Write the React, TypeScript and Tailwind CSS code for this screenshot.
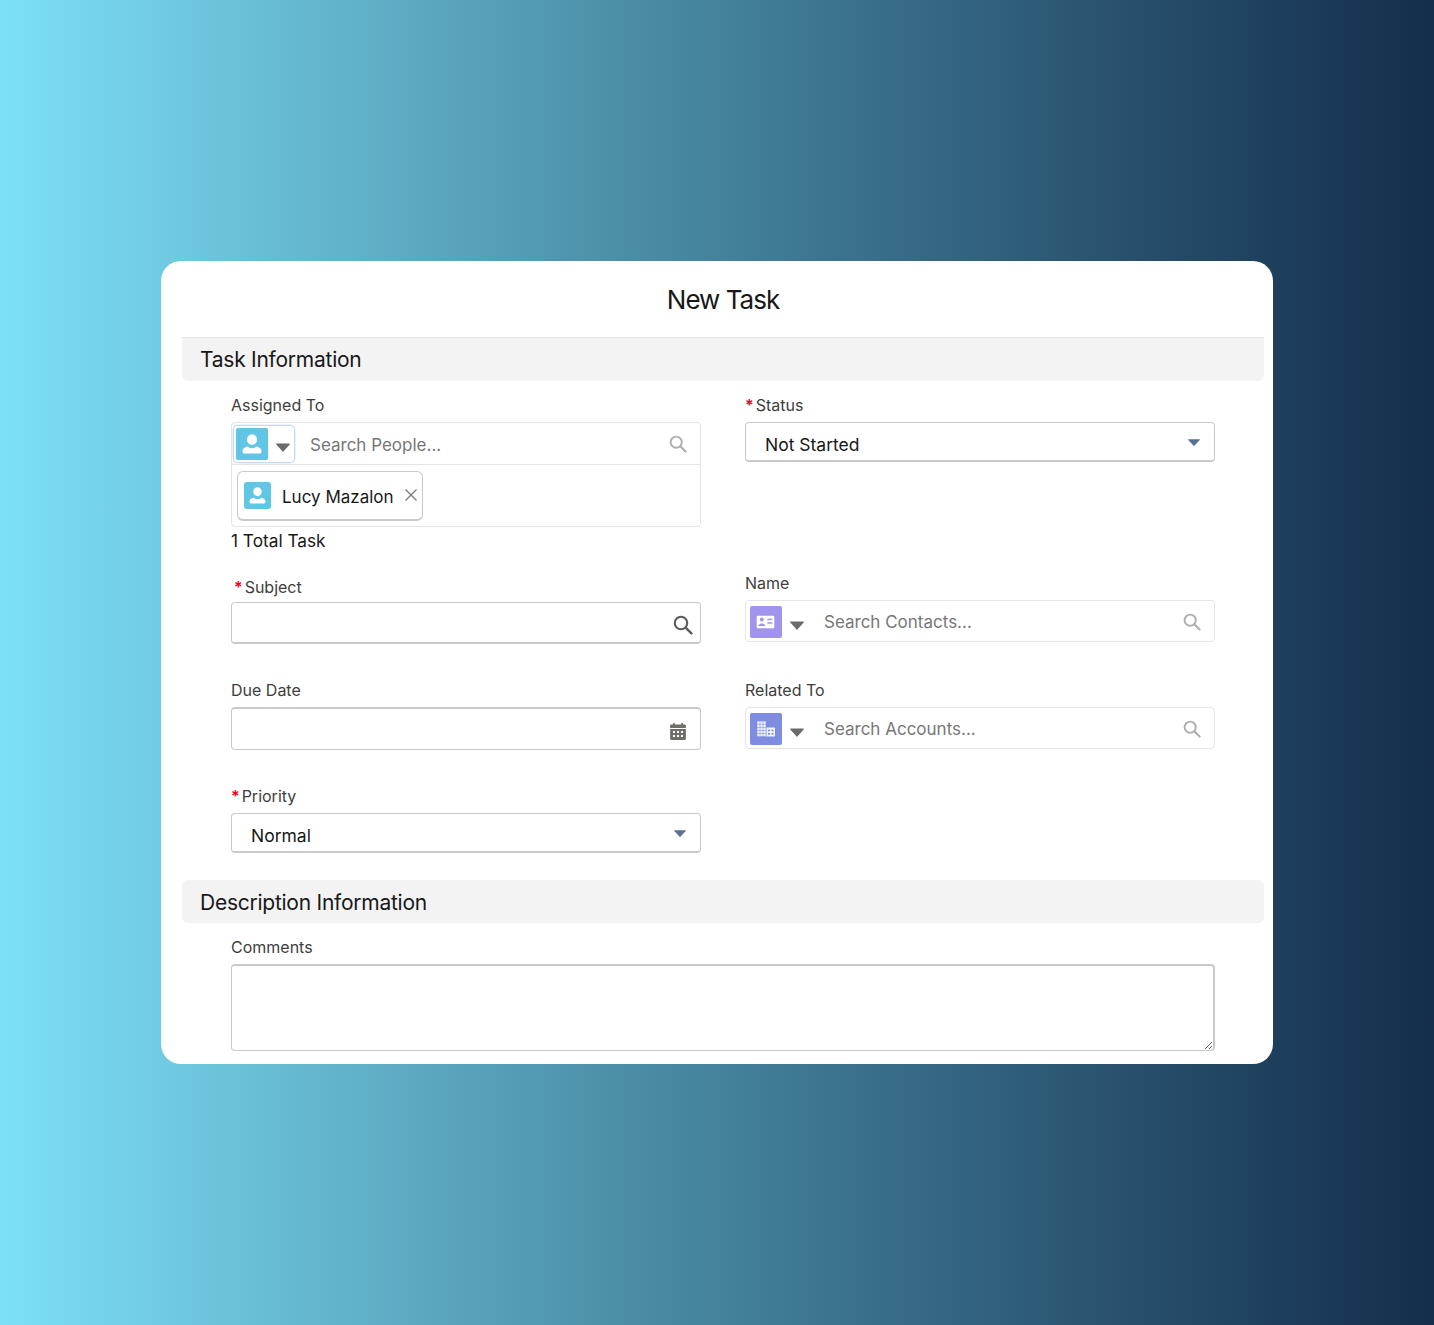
import type { ReactNode } from "react";

function Caret({ className }: { className: string }) {
  return (
    <svg viewBox="0 0 14 9" className={className}>
      <path d="M.8.6h12.4c.5 0 .8.5.5.9L7.4 8.4c-.2.3-.6.3-.8 0L.3 1.5C0 1.1.3.6.8.6z" fill="currentColor" />
    </svg>
  );
}

function SearchIcon({ className }: { className: string }) {
  return (
    <svg viewBox="0 0 20 20" fill="none" stroke="currentColor" className={className}>
      <circle cx="8" cy="8" r="6.2" strokeWidth="2.1" />
      <path d="M12.6 12.6l5.8 5.8" strokeWidth="2.400" strokeLinecap="round" />
    </svg>
  );
}

function PersonIcon({ className }: { className: string }) {
  return (
    <svg viewBox="0 0 32 32" fill="#fff" className={className}>
      <ellipse cx="16" cy="11.5" rx="5" ry="5.3" />
      <path d="M6.5 23c0-2.4 2.3-3.6 5-4.4 1.400 1.200 2.900 1.700 4.500 1.700s3.100-.5 4.500-1.700c2.700.8 5 2 5 4.400v.8c0 1-.8 1.700-1.700 1.700H8.200c-.9 0-1.700-.7-1.700-1.700z" />
    </svg>
  );
}

function ContactIcon() {
  return (
    <svg viewBox="0 0 32 32" className="h-8 w-8">
      <rect x="6.700" y="9.700" width="17.600" height="12.600" rx="1.200" fill="#fff" />
      <circle cx="11.800" cy="13.600" r="2" fill="#a094ed" />
      <path d="M8.300 20c0-1.800 1.600-2.600 3.500-2.600s3.500.8 3.500 2.600z" fill="#a094ed" />
      <rect x="17.300" y="12.700" width="5" height="1.500" fill="#a094ed" />
      <rect x="17.300" y="16.200" width="5" height="1.500" fill="#a094ed" />
    </svg>
  );
}

function AccountIcon() {
  const cells = [];
  for (let r = 0; r < 5; r++) {
    for (let c = 0; c < 3; c++) {
      cells.push(<rect key={`a${r}${c}`} x={7.3 + c * 3} y={8.3 + r * 3.1} width="2.400" height="2.600" fill="#fff" fillOpacity="0.9" />);
    }
  }
  return (
    <svg viewBox="0 0 32 32" className="h-8 w-8">
      {cells}
      <rect x="16.500" y="14.500" width="8.500" height="9" fill="#fff" fillOpacity="0.9" />
      <g fill="#7f8de1">
        <rect x="18" y="16.600" width="2" height="1.700" />
        <rect x="21.500" y="16.600" width="2" height="1.700" />
        <rect x="18" y="20" width="2" height="1.700" />
        <rect x="21.500" y="20" width="2" height="1.700" />
      </g>
    </svg>
  );
}

function CalendarIcon() {
  return (
    <svg viewBox="0 0 16 17" className="h-[17px] w-4" fill="#706e6b">
      <rect x="3" y="0" width="1.800" height="3" rx="0.500" />
      <rect x="11.200" y="0" width="1.800" height="3" rx="0.500" />
      <path d="M1 1.500h14c.5 0 .9.4.9.9V5H.1V2.400c0-.5.4-.9.9-.9z" />
      <path
        fillRule="evenodd"
        d="M.1 6h15.800v9.700c0 .7-.5 1.200-1.200 1.200H1.300c-.7 0-1.200-.5-1.200-1.200zM3 8v2h2V8zm4 0v2h2V8zm4 0v2h2V8zM3 12v2h2v-2zm4 0v2h2v-2zm4 0v2h2v-2z"
      />
    </svg>
  );
}

function Label({ required, children }: { required?: boolean; children: ReactNode }) {
  return (
    <div className="flex h-[18px] items-center text-[16px] leading-[18px] text-[#3e3e3c]">
      {required && <span className="mr-[2px] font-semibold text-[#ea001e]">*</span>}
      {children}
    </div>
  );
}

function SelectBox({ value }: { value: string }) {
  return (
    <div className="flex h-10 items-center justify-between rounded-[4px] border border-b-2 border-[#c9c9c9] pl-[19px] pr-[14px]">
      <span className="pt-2 text-[17.500px] text-[#181818]">{value}</span>
      <Caret className="mt-[2px] h-[9px] w-3 text-[#5a6e93]" />
    </div>
  );
}

function Lookup({ icon, placeholder }: { icon: ReactNode; placeholder: string }) {
  return (
    <div className="flex h-[42px] items-center rounded-[4px] border border-[#e5e5e5] pl-1 pr-[14px] pt-[2px]">
      {icon}
      <Caret className="ml-2 mt-[6px] h-[9px] w-[14px] text-[#6b6b6b]" />
      <input
        placeholder={placeholder}
        className="ml-5 min-w-0 flex-1 translate-y-[1px] bg-transparent text-[17px] outline-none placeholder:text-[#777]"
      />
      <SearchIcon className="h-[18px] w-[18px] translate-x-[1px] text-[#aeaeae]" />
    </div>
  );
}

function SectionHeader({ title, top }: { title: string; top?: boolean }) {
  return (
    <div
      className={`flex items-center bg-[#f3f3f3] pl-[18px] text-[21px] tracking-[-0.25px] text-[#181818] ${
        top ? "h-11 rounded-b-[6px] border-t border-[#e5e5e5] pt-[1px]" : "h-[43px] rounded-[6px] pt-[2px]"
      }`}
    >
      {title}
    </div>
  );
}

export default function App() {
  return (
    <div
      className="flex min-h-screen items-center justify-center bg-gradient-to-r from-[#7de1f6] to-[#142e4b] py-[1px]"
      style={{ fontFamily: "Inter, 'Liberation Sans', sans-serif" }}
    >
      <div className="h-[803px] w-[1112px] rounded-[20px] bg-white pl-[21px] pr-[9px]">
        <div className="flex h-[76px] items-center justify-center text-[26px] tracking-[-1px] text-[#181818]">New Task</div>
        <SectionHeader title="Task Information" top />

        <div className="grid grid-cols-2 grid-rows-[178px_107px_106px_93px] gap-x-[44px] px-[49px] pt-[15px]">
          <div>
            <Label>Assigned To</Label>
            <div className="mt-2 h-[105px] rounded-[4px] border border-[#e5e5e5]">
              <div className="flex h-[42px] items-center border-b border-[#e5e5e5] pl-[2px] pr-[14px]">
                <div className="flex h-9 w-[60px] items-center rounded-[4px] bg-white pl-[2px] shadow-[0_0_2px_1px_#b4cdf0]">
                  <div className="rounded-[2px] bg-[#61c5e5]">
                    <PersonIcon className="h-8 w-8" />
                  </div>
                  <Caret className="ml-2 mt-2 h-[9px] w-[14px] text-[#6b6b6b]" />
                </div>
                <input
                  placeholder="Search People..."
                  className="ml-4 min-w-0 flex-1 translate-y-[2px] bg-transparent text-[17px] outline-none placeholder:text-[#777]"
                />
                <SearchIcon className="h-[18px] w-[18px] translate-x-[1px] text-[#aeaeae]" />
              </div>
              <div className="pl-[5px] pt-[6px]">
                <div className="flex h-[50px] w-[186px] items-center rounded-[6px] border border-b-2 border-[#c9c9c9] pl-[6px]">
                  <div className="rounded-[3px] bg-[#61c5e5]">
                    <PersonIcon className="h-[27px] w-[27px]" />
                  </div>
                  <span className="ml-[11px] pt-1 text-[17px] text-[#181818]">Lucy Mazalon</span>
                  <svg viewBox="0 0 14 14" className="mb-[1px] ml-[10px] h-[14px] w-[14px]" stroke="#7a7a7a" strokeWidth="1.300">
                    <path d="M1.500 1.500l11 11M12.500 1.500l-11 11" />
                  </svg>
                </div>
              </div>
            </div>
            <div className="mt-[3px] text-[17.250px] leading-[22px] text-[#181818]">1 Total Task</div>
          </div>

          <div>
            <Label required>Status</Label>
            <div className="mt-2">
              <SelectBox value="Not Started" />
            </div>
          </div>

          <div className="pt-1">
            <div className="pl-[3px]">
              <Label required>Subject</Label>
            </div>
            <div className="mt-[6px] flex h-[42px] items-center justify-end rounded-[4px] border border-b-2 border-[#c9c9c9] pr-[7px] pt-1">
              <SearchIcon className="h-5 w-5 text-[#5c5c5c]" />
            </div>
          </div>

          <div>
            <Label>Name</Label>
            <div className="mt-2">
              <Lookup
                placeholder="Search Contacts..."
                icon={
                  <div className="rounded-[2px] bg-[#a094ed]">
                    <ContactIcon />
                  </div>
                }
              />
            </div>
          </div>

          <div>
            <Label>Due Date</Label>
            <div className="mt-2 flex h-[43px] items-center justify-end rounded-[4px] border border-t-2 border-[#c9c9c9] pr-[14px] pt-1">
              <CalendarIcon />
            </div>
          </div>

          <div>
            <Label>Related To</Label>
            <div className="mt-2">
              <Lookup
                placeholder="Search Accounts..."
                icon={
                  <div className="rounded-[2px] bg-[#7f8de1]">
                    <AccountIcon />
                  </div>
                }
              />
            </div>
          </div>

          <div>
            <Label required>Priority</Label>
            <div className="mt-2">
              <SelectBox value="Normal" />
            </div>
          </div>
        </div>

        <SectionHeader title="Description Information" />

        <div className="px-[49px] pt-[15px]">
          <Label>Comments</Label>
          <textarea className="mt-2 block h-[87px] w-full rounded-[4px] border-2 border-b border-l border-[#c9c9c9] outline-none" />
        </div>
      </div>
    </div>
  );
}
